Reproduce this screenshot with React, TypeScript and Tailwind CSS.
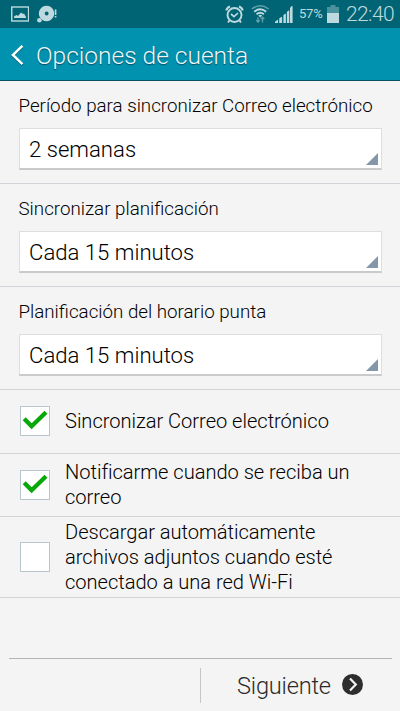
import React from "react";

function StatusBar() {
  return (
    <div className="flex h-7 items-center bg-[#016475] text-[#bedadf]">
      <svg className="ml-[11px] h-4 w-[18px]" viewBox="0 0 18 16">
        <rect x="0.75" y="1" width="16.8" height="14" fill="none" stroke="currentColor" strokeWidth="1.4" />
        <path d="M3 12V10.5L5.5 9L7 10L10 6.5L12 8L13 7.5L15 11V12Z" fill="currentColor" />
      </svg>
      <svg className="ml-2 h-[18px] w-5" viewBox="0 0 20 18">
        <path fillRule="evenodd" d="M9.6 0.8A7.7 7.7 0 1 1 9.5 0.8ZM9.6 6.6A1.9 1.9 0 1 0 9.7 6.6Z" fill="currentColor" />
        <circle cx="2.4" cy="15.3" r="2.3" fill="currentColor" />
        <path d="M18.6 4.5V10M18.6 11V12.5" stroke="currentColor" strokeWidth="1.6" />
      </svg>
      <svg className="ml-[168px] h-[19px] w-[19px]" viewBox="0 0 19 19" fill="none" stroke="currentColor">
        <circle cx="9.5" cy="10" r="7" strokeWidth="1.9" />
        <path d="M1.3 5.5Q2 2.5 5 1.5M17.7 5.5Q17 2.5 14 1.5M4.5 15.5L3 17.5M14.5 15.5L16 17.5" strokeWidth="2" />
        <path d="M6 9L9 11.7L13 8" strokeWidth="1.7" />
      </svg>
      <svg className="ml-[7px] h-5 w-[19px]" viewBox="0 0 19 20" fill="none" stroke="currentColor">
        <path d="M0.8 5Q9.2 -1.5 17.6 5" strokeWidth="1.5" opacity="0.5" />
        <path d="M3.2 7.7Q9.2 2.9 15.2 7.7M5.5 10.3Q9.2 7.3 12.9 10.3" strokeWidth="1.9" />
        <path d="M7.3 11.6Q9.2 10.1 11.1 11.6L9.2 13.4Z" fill="currentColor" stroke="none" />
        <path d="M7 13V18M5.2 16L7 18.2L8.8 16M11.5 18.5V13.3M9.7 15.2L11.5 13L13.3 15.2" strokeWidth="1.3" opacity="0.5" />
      </svg>
      <svg className="ml-[5px] h-[18px] w-[18px]" viewBox="0 0 18 18" fill="currentColor">
        <path d="M0 18V16.7L3 14.5V18ZM4.2 18V13.5L6.2 12H7.1V18ZM8.4 18V10.2L10 8.8H10.9V18ZM11.9 18V7L13.5 5.5H14.3V18ZM15 18V3L16.7 1H17.6V18Z" />
      </svg>
      <span className="ml-[6px] w-[25px] whitespace-nowrap text-[13px] leading-7 tracking-[-0.2px]">57%</span>
      <svg className="ml-[3px] h-[18px] w-3" viewBox="0 0 12 18" fill="currentColor">
        <path d="M0 2H3.5V0H8.5V2H12V8H0Z" opacity="0.38" />
        <rect y="8" width="12" height="10" />
      </svg>
      <span className="ml-[7px] whitespace-nowrap text-[21px] font-light leading-7 tracking-[-0.6px]">22:40</span>
    </div>
  );
}

function Header() {
  return (
    <header className="flex h-[53px] items-center border-b border-[#075062] bg-[#0092af] text-white">
      <svg className="ml-[11px] mt-px h-[22px] w-[13px] drop-shadow-[0_1px_0_rgba(0,50,65,0.6)]" viewBox="0 0 13 22" fill="none" stroke="currentColor" strokeWidth="2.5">
        <path d="M11.4 1.8L1.9 11L11.4 20.2" />
      </svg>
      <h1 className="ml-3 mt-1 whitespace-nowrap text-[24.5px] font-light leading-8 text-[#edf7f9] [text-shadow:0_1px_1px_rgba(0,40,55,0.65)]">Opciones de cuenta</h1>
    </header>
  );
}

function SelectField({ label, value }: { label: string; value: string }) {
  return (
    <section className="h-[103px] border-b border-[#d1d5da] pl-[19px] pr-[18px] pt-[12px]">
      <div className="-ml-[0.5px] h-[35px] whitespace-nowrap text-[18.75px] font-light leading-[26px]">{label}</div>
      <div className="flex h-[42px] items-center justify-between border border-b-2 border-[#dcdfe0] border-b-[#c9cacb] bg-white pl-[9px] pr-[3px]">
        <span className="mt-px whitespace-nowrap text-[22.15px] font-light leading-[29px]">{value}</span>
        <svg className="mb-[3px] h-3 w-3 self-end" viewBox="0 0 12 12">
          <path d="M0 12L12 0V12Z" fill="#8496a9" />
        </svg>
      </div>
    </section>
  );
}

function CheckRow({ checked, lines, height }: { checked: boolean; lines: string[]; height: string }) {
  return (
    <label className={`flex items-center border-b border-[#d1d5da] pl-5 ${height}`}>
      <span className="-mt-px flex h-[30px] w-[30px] shrink-0 border border-[#b7c7cc] bg-white">
        {checked && (
          <svg className="h-7 w-7" viewBox="0 0 28 28" fill="none">
            <path d="M3.2 11.7L10.6 19.3L25 5.2" stroke="#08a808" strokeWidth="4.2" />
          </svg>
        )}
      </span>
      <span className="ml-[15px] whitespace-nowrap text-[20.1px] font-light leading-[25px] tracking-[-0.03px]">
        {lines.map((line) => (
          <span className="block" key={line}>{line}</span>
        ))}
      </span>
    </label>
  );
}

export default function App() {
  return (
    <div className="flex h-[711px] w-[400px] flex-col overflow-hidden bg-[#f4f4f4] font-[Roboto,sans-serif] text-black">
      <StatusBar />
      <Header />
      <main className="flex-1">
        <SelectField label="Período para sincronizar Correo electrónico" value="2 semanas" />
        <SelectField label="Sincronizar planificación" value="Cada 15 minutos" />
        <SelectField label="Planificación del horario punta" value="Cada 15 minutos" />
        <CheckRow checked height="h-16" lines={["Sincronizar Correo electrónico"]} />
        <CheckRow checked height="h-[63px]" lines={["Notificarme cuando se reciba un", "correo"]} />
        <CheckRow checked={false} height="h-[81px]" lines={["Descargar automáticamente", "archivos adjuntos cuando esté", "conectado a una red Wi-Fi"]} />
      </main>
      <footer className="ml-[9px] mr-2 flex h-[53px] border-t border-[#b5b5b5] pl-[191px]">
        <div className="mt-[9px] flex h-[35px] items-center border-l border-[#c5c5c5] text-[#2b2b2b]">
          <span className="ml-9 whitespace-nowrap text-[23.6px] font-light leading-8 tracking-[-0.2px]">Siguiente</span>
          <svg className="-mt-[3px] ml-[11px] h-[21px] w-[21px]" viewBox="0 0 21 21">
            <circle cx="10.5" cy="10.5" r="10.5" fill="#2d2d2d" />
            <path d="M8 4.5L13.8 10.5L8 16.5" fill="none" stroke="#f4f4f4" strokeWidth="2.2" />
          </svg>
        </div>
      </footer>
    </div>
  );
}
